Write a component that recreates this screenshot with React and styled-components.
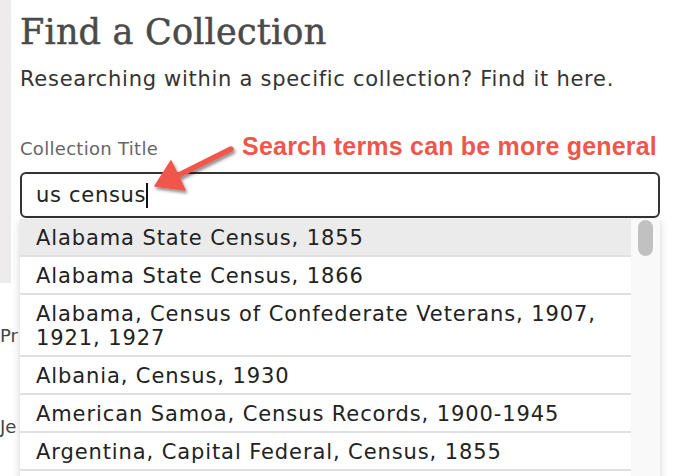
import React from "react";
import styled, { createGlobalStyle } from "styled-components";

const GlobalStyle = createGlobalStyle`
  html, body { margin: 0; padding: 0; background: #fff; }
  body { font-family: "DejaVu Sans", Verdana, sans-serif; }
  * { box-sizing: border-box; }
`;

const Page = styled.div`
  position: relative;
  width: 676px;
  height: 476px;
  overflow: hidden;
  display: flex;
  background: #fff;
`;

const Side = styled.div`
  width: 20px;
  flex-shrink: 0;
  display: flex;
  flex-direction: column;
  overflow: hidden;
`;

const SideShade = styled.div`
  width: 11px;
  height: 283px;
  background: #edebeb;
`;

const SideText = styled.div`
  margin-top: ${(p) => p.$gap}px;
  font-size: 18px;
  line-height: 24px;
  color: #444;
  white-space: nowrap;
`;

const Main = styled.div`
  width: 640px;
  flex-shrink: 0;
  display: flex;
  flex-direction: column;
  padding-top: 12px;
`;

const Title = styled.h1`
  margin: 0;
  font-family: "DejaVu Serif", Georgia, serif;
  font-weight: normal;
  font-size: 35px;
  line-height: 40px;
  letter-spacing: 0.2px;
  color: #4a4a4a;
  -webkit-text-stroke: 0.5px #4a4a4a;
`;

const Subtitle = styled.p`
  margin: 13px 0 0;
  font-size: 21px;
  line-height: 28px;
  letter-spacing: 0.72px;
  color: #333;
`;

const LabelRow = styled.div`
  margin-top: 39px;
  display: flex;
  align-items: baseline;
  justify-content: space-between;
`;

const Label = styled.label`
  font-size: 18px;
  line-height: 24px;
  letter-spacing: 0.3px;
  color: #666;
`;

const Callout = styled.span`
  margin-right: 3px;
  font-family: "Liberation Sans", Arial, sans-serif;
  font-weight: bold;
  font-size: 25px;
  line-height: 28px;
  letter-spacing: 0.2px;
  color: #f0574b;
`;

const FieldWrap = styled.div`
  position: relative;
  margin-top: 11px;
`;

const Field = styled.div`
  height: 46px;
  border: 2px solid #333;
  border-radius: 6px;
  padding: 0 14px;
  display: flex;
  align-items: center;
  font-size: 21px;
  line-height: 42px;
  letter-spacing: 0.7px;
  color: #222;
  background: #fff;
`;

const Caret = styled.span`
  display: inline-block;
  width: 2px;
  height: 25px;
  background: #111;
`;

const Dropdown = styled.div`
  position: absolute;
  top: calc(100% + 1px);
  left: 0;
  width: 640px;
  height: 262px;
  display: flex;
  background: #fff;
  box-shadow: 0 2px 8px rgba(0, 0, 0, 0.18);
`;

const List = styled.ul`
  flex: 1;
  margin: 0;
  padding: 0;
  list-style: none;
`;

const Option = styled.li`
  padding: 7px 16px 5px;
  font-size: 21px;
  line-height: 24px;
  letter-spacing: 0.9px;
  color: #222;
  border-bottom: 2px solid #e0e0e0;
  background: ${(p) => (p.$active ? "#ebebeb" : "#fff")};
`;

const Track = styled.div`
  width: 29px;
  flex-shrink: 0;
  padding: 1px 7px;
  background: #f9f9f9;
`;

const Thumb = styled.div`
  width: 15px;
  height: 36px;
  border-radius: 8px;
  background: #c1c1c1;
`;

const ArrowSvg = styled.svg`
  position: absolute;
  left: 140px;
  top: 140px;
  width: 100px;
  height: 60px;
  pointer-events: none;
  overflow: visible;
`;

const options = [
  "Alabama State Census, 1855",
  "Alabama State Census, 1866",
  "Alabama, Census of Confederate Veterans, 1907, 1921, 1927",
  "Albania, Census, 1930",
  "American Samoa, Census Records, 1900-1945",
  "Argentina, Capital Federal, Census, 1855",
];

function Arrow() {
  return (
    <ArrowSvg viewBox="0 0 100 60">
      <defs>
        <filter id="arrowShadow" x="-30%" y="-30%" width="160%" height="160%">
          <feDropShadow dx="1.5" dy="2.5" stdDeviation="1.6" floodColor="#000" floodOpacity="0.45" />
        </filter>
      </defs>
      <g filter="url(#arrowShadow)" fill="#f0574b" stroke="#f0574b">
        <line x1="37" y1="36" x2="91" y2="9" strokeWidth="5.5" strokeLinecap="round" />
        <polygon points="15,46 31,21 38,35 45,50" strokeWidth="1.5" strokeLinejoin="round" />
      </g>
    </ArrowSvg>
  );
}

export default function App() {
  return (
    <>
      <GlobalStyle />
      <Page>
        <Side>
          <SideShade />
          <SideText $gap={41}>Pr</SideText>
          <SideText $gap={67}>Je</SideText>
        </Side>
        <Main>
          <Title>Find a Collection</Title>
          <Subtitle>Researching within a specific collection? Find it here.</Subtitle>
          <LabelRow>
            <Label>Collection Title</Label>
            <Callout>Search terms can be more general</Callout>
          </LabelRow>
          <FieldWrap>
            <Field>
              us census
              <Caret />
            </Field>
            <Dropdown>
              <List>
                {options.map((o, i) => (
                  <Option key={o} $active={i === 0}>
                    {o}
                  </Option>
                ))}
              </List>
              <Track>
                <Thumb />
              </Track>
            </Dropdown>
          </FieldWrap>
        </Main>
        <Arrow />
      </Page>
    </>
  );
}
